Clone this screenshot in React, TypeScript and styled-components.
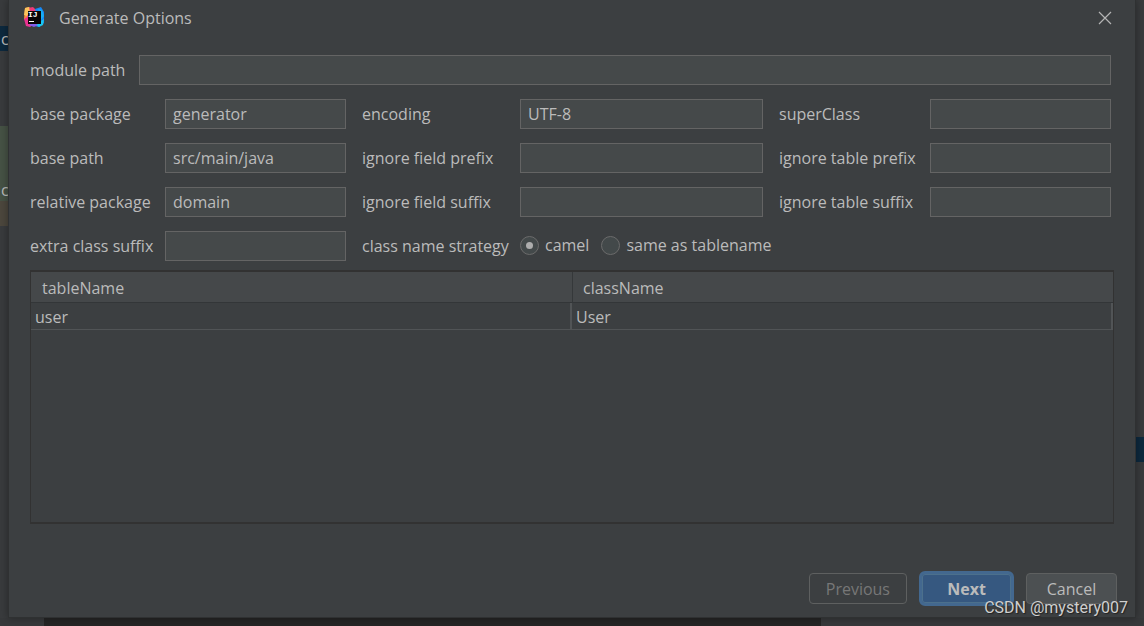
import React from "react";
import styled, { createGlobalStyle, css } from "styled-components";

const GlobalStyle = createGlobalStyle`
  * { box-sizing: border-box; }
  body {
    margin: 0;
    background: #37393b;
    color: #bbbbbb;
    font-family: "Open Sans", "Noto Sans", sans-serif;
    font-size: 16px;
    line-height: 20px;
  }
  button, input { font: inherit; color: inherit; }
`;

const Desktop = styled.div`
  position: relative;
  min-height: 100vh;
  display: grid;
  grid-template-columns: 8px minmax(0, 1fr) 8px;
  grid-template-rows: 1fr 8px;
  overflow: hidden;
`;

const Strip = styled.div`
  display: flex;
  flex-direction: column;
  overflow: hidden;
  background: #393b3d;
`;

const Band = styled.div<{ $height: number; $color?: string }>`
  flex: none;
  height: ${(p) => p.$height}px;
  padding-left: 1px;
  line-height: 26px;
  background: ${(p) => p.$color ?? "transparent"};
`;

const StatusStrip = styled.div`
  grid-column: 1 / -1;
  display: grid;
  grid-template-columns: 44px 777fr 323fr;
  background: #37393b;
`;

const StatusPanel = styled.div`
  grid-column: 2;
  background: #252525;
`;

const Dialog = styled.main`
  z-index: 1;
  display: flex;
  flex-direction: column;
  background: #3c3f41;
  border: solid #2f3132;
  border-width: 0 1px 1px;
  box-shadow: 0 0 8px rgba(0, 0, 0, 0.35);
`;

const TitleBar = styled.header`
  display: flex;
  align-items: center;
  height: 35px;
  padding: 0 23px 0 15px;
`;

const Title = styled.h1`
  flex: 1;
  margin: 0 0 0 14px;
  font-size: 16px;
  font-weight: 400;
`;

const CloseButton = styled.button`
  display: flex;
  padding: 0;
  border: 0;
  background: none;
`;

const Content = styled.div`
  flex: 1;
  display: flex;
  flex-direction: column;
  padding: 20px 21px 0 21px;
`;

const Form = styled.form`
  display: flex;
  flex-direction: column;
  gap: 14px;
  padding-right: 3px;
`;

const PathRow = styled.div`
  display: flex;
  align-items: center;
  gap: 14px;
`;

const FieldGrid = styled.div`
  display: grid;
  grid-template-columns: 119px 181fr 142px 243fr 135px 181fr;
  gap: 14px 16px;
  align-items: center;
`;

const Label = styled.label`
  padding-bottom: 1px;
  white-space: nowrap;
`;

const TextField = styled.input`
  flex: 1;
  width: 100%;
  min-width: 0;
  height: 30px;
  padding: 0 7px 1px;
  background: #45494a;
  border: 1px solid #646464;
  border-radius: 0;
  outline: none;
`;

const RadioGroup = styled.div`
  grid-column: span 3;
  display: flex;
  gap: 12px;
  padding-bottom: 2px;
`;

const RadioOption = styled.label`
  display: flex;
  align-items: center;
  gap: 6px;
  white-space: nowrap;
`;

const Radio = styled.input`
  appearance: none;
  display: grid;
  place-items: center;
  width: 19px;
  height: 19px;
  margin: 0;
  background: #43494a;
  border: 1px solid #6b6b6b;
  border-radius: 50%;
  &:checked::before {
    content: "";
    width: 7px;
    height: 7px;
    border-radius: 50%;
    background: #adadad;
  }
`;

const TablePane = styled.section`
  flex: 1;
  min-height: 120px;
  margin-top: 9px;
  border: solid #323232;
  border-width: 2px 1px 2px;
`;

const Table = styled.table`
  width: 100%;
  table-layout: fixed;
  border-collapse: separate;
  border-spacing: 0;
  text-align: left;
`;

const HeaderCell = styled.th`
  height: 31px;
  padding: 2px 11px 0;
  font-weight: 400;
  background: #45484a;
  border-bottom: 1px solid #333638;
  & + & {
    padding-left: 10px;
    border-left: 1px solid #35383a;
  }
`;

const BodyCell = styled.td`
  height: 27px;
  padding: 2px 4px 0;
  border-bottom: 1px solid #515456;
  border-right: 2px solid #515456;
`;

const ButtonBar = styled.footer`
  display: flex;
  justify-content: flex-end;
  align-items: center;
  gap: 12px;
  padding: 47px 18px 11px;
`;

const DialogButton = styled.button<{ $kind?: "primary" | "plain" }>`
  height: 31px;
  min-width: 91px;
  padding: 1px 16px 0;
  color: #bbbbbb;
  background: #4c5052;
  border: 1px solid #5e6060;
  border-radius: 4px;
  &:disabled {
    color: #777777;
    background: transparent;
  }
  ${(p) =>
    p.$kind === "primary" &&
    css`
      height: 35px;
      min-width: 95px;
      font-weight: 700;
      background: #365880;
      border: 3px solid #43688f;
      border-radius: 6px;
      box-shadow: inset 0 0 0 1px #4c708c;
    `}
`;

const Watermark = styled.div`
  position: absolute;
  z-index: 2;
  right: 16px;
  bottom: 8px;
  color: #cfcfcf;
  font-family: Roboto, Arial, sans-serif;
  font-size: 16px;
  text-shadow: 1px 1px 1px #222222;
`;

function IdeaLogo() {
  return (
    <svg width="21" height="21" viewBox="0 0 21 21" aria-hidden="true">
      <path d="M1 1 5 0 9 3 8 12 3 15 0 12Z" fill="#f68b3c" />
      <path d="M4 1 9 0 13 4 5 13 3 9Z" fill="#ef3978" />
      <path d="M1 1 5 0 6 5 3 9 0 8Z" fill="#fbc35c" />
      <path d="M0 12 5 9 10 17 6 20 2 19Z" fill="#e9338f" />
      <path d="M11 2 17 0 20 5 20 16 15 20 6 18 14 13Z" fill="#1686f7" />
      <path d="M14 2 18 3 20 9 17 13Z" fill="#17aef2" />
      <path d="M17 14 20 12 19 18 15 20 12 18Z" fill="#18c6ef" />
      <path d="M5 18 9 15 14 18 10 20Z" fill="#845be8" />
      <rect x="4" y="4" width="13" height="13" fill="#090606" />
      <text x="4" y="10" fill="#fff" fontFamily="Liberation Mono, monospace" fontSize="8" fontWeight="700">IJ</text>
      <rect x="5" y="14" width="5" height="1" fill="#fff" />
    </svg>
  );
}

interface FieldProps {
  id: string;
  label: string;
  value?: string;
}

function Field({ id, label, value = "" }: FieldProps) {
  return (
    <>
      <Label htmlFor={id}>{label}</Label>
      <TextField id={id} type="text" defaultValue={value} />
    </>
  );
}

const fields: FieldProps[] = [
  { id: "base-package", label: "base package", value: "generator" },
  { id: "encoding", label: "encoding", value: "UTF-8" },
  { id: "super-class", label: "superClass" },
  { id: "base-path", label: "base path", value: "src/main/java" },
  { id: "field-prefix", label: "ignore field prefix" },
  { id: "table-prefix", label: "ignore table prefix" },
  { id: "relative-package", label: "relative package", value: "domain" },
  { id: "field-suffix", label: "ignore field suffix" },
  { id: "table-suffix", label: "ignore table suffix" },
  { id: "class-suffix", label: "extra class suffix" },
];

const rows = [{ tableName: "user", className: "User" }];

export default function App() {
  return (
    <Desktop>
      <GlobalStyle />
      <Strip>
        <Band $height={26} />
        <Band $height={25} $color="#0d293e">c</Band>
        <Band $height={75} />
        <Band $height={51} $color="#465245" />
        <Band $height={24} $color="#465245">c</Band>
        <Band $height={25} $color="#4c473d" />
      </Strip>
      <Dialog>
        <TitleBar>
          <IdeaLogo />
          <Title>Generate Options</Title>
          <CloseButton type="button" aria-label="Close">
            <svg width="14" height="14" viewBox="0 0 14 14" stroke="#b4b4b4" strokeWidth="1.2">
              <path d="M1 1 13 13M13 1 1 13" />
            </svg>
          </CloseButton>
        </TitleBar>
        <Content>
          <Form>
            <PathRow>
              <Field id="module-path" label="module path" />
            </PathRow>
            <FieldGrid>
              {fields.map((field) => (
                <Field key={field.id} {...field} />
              ))}
              <Label as="span" id="strategy">class name strategy</Label>
              <RadioGroup role="radiogroup" aria-labelledby="strategy">
                <RadioOption>
                  <Radio type="radio" name="strategy" defaultChecked />
                  camel
                </RadioOption>
                <RadioOption>
                  <Radio type="radio" name="strategy" />
                  same as tablename
                </RadioOption>
              </RadioGroup>
            </FieldGrid>
          </Form>
          <TablePane>
            <Table>
              <thead>
                <tr>
                  <HeaderCell>tableName</HeaderCell>
                  <HeaderCell>className</HeaderCell>
                </tr>
              </thead>
              <tbody>
                {rows.map((row) => (
                  <tr key={row.tableName}>
                    <BodyCell>{row.tableName}</BodyCell>
                    <BodyCell>{row.className}</BodyCell>
                  </tr>
                ))}
              </tbody>
            </Table>
          </TablePane>
        </Content>
        <ButtonBar>
          <DialogButton type="button" disabled>Previous</DialogButton>
          <DialogButton type="button" $kind="primary">Next</DialogButton>
          <DialogButton type="button">Cancel</DialogButton>
        </ButtonBar>
      </Dialog>
      <Strip>
        <Band $height={437} />
        <Band $height={25} $color="#0d293e" />
      </Strip>
      <StatusStrip>
        <StatusPanel />
      </StatusStrip>
      <Watermark>CSDN @mystery007</Watermark>
    </Desktop>
  );
}
